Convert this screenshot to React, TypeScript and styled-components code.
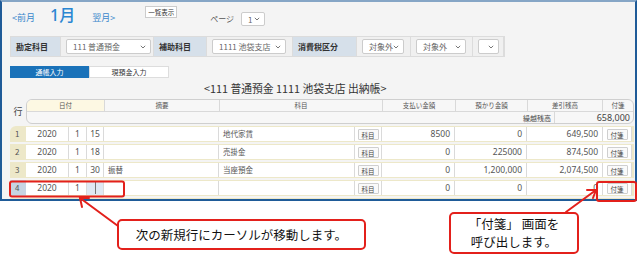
import React from "react";
import styled, { createGlobalStyle } from "styled-components";

const Global = createGlobalStyle`
  html, body { margin: 0; padding: 0; background: #fff; }
  body { font-family: "Noto Sans CJK JP", "Noto Sans", sans-serif; }
  * { box-sizing: border-box; }
`;

const Page = styled.div`
  position: relative;
  width: 639px;
  height: 257px;
  overflow: hidden;
  background: #fff;
`;

const Window = styled.div`
  width: 637px;
  height: 201px;
  border-top: 2px solid #86a6c6;
  border-left: 2px solid #1f5b98;
  border-right: 2px solid #1f5b98;
  border-bottom: 2px solid #1f5b98;
  background: #f4f4f4;
  overflow: hidden;
`;

const Nav = styled.div`
  height: 34px;
  display: flex;
  align-items: flex-start;
  padding-left: 10px;
  color: #3a86c8;
`;

const MonthLink = styled.span<{ $ml?: number }>`
  font-size: 9px;
  margin-top: 10px;
  margin-left: ${(p) => p.$ml ?? 0}px;
  color: #3b88cc;
  line-height: 12px;
`;

const Month = styled.span`
  font-family: "Noto Sans", "Noto Sans CJK JP", sans-serif;
  font-size: 16px;
  line-height: 20px;
  margin-top: 3px;
  margin-left: 15px;
  color: #2a86d2;
  font-weight: 500;
`;

const ListButton = styled.span`
  margin-left: 30px;
  margin-top: 4px;
  height: 12px;
  padding: 0 2px;
  font-size: 6.5px;
  line-height: 11px;
  color: #333;
  background: #fff;
  border: 1px solid #ccc;
`;

const PageLabel = styled.span`
  margin-left: 33px;
  margin-top: 11px;
  font-size: 8px;
  line-height: 12px;
  color: #555;
`;

const SelectBox = styled.span<{ $w: number; $h?: number }>`
  display: flex;
  align-items: center;
  justify-content: space-between;
  width: ${(p) => p.$w}px;
  height: ${(p) => p.$h ?? 15}px;
  padding: 0 4px 0 6px;
  background: #fff;
  border: 1px solid #ccc;
  border-radius: 2px;
  font-size: 8px;
  color: #666;
  white-space: nowrap;
`;

const NavSelect = styled.div`
  display: flex;
  margin-left: 7px;
  margin-top: 10px;
`;

const Chevron = () => (
  <svg width="6" height="4" viewBox="0 0 6 4">
    <path d="M0.8 0.8 L3 3 L5.2 0.8" fill="none" stroke="#777" strokeWidth="1" />
  </svg>
);

const Select = ({ w, h, children }: { w: number; h?: number; children?: React.ReactNode }) => (
  <SelectBox $w={w} $h={h}>
    <span>{children}</span>
    <Chevron />
  </SelectBox>
);

const FilterBar = styled.div`
  margin-left: 8px;
  width: 495px;
  height: 21px;
  display: flex;
  border: 1px solid #dcdcdc;
  background: #f0f0f0;
`;

const FilterLabel = styled.div<{ $w: number }>`
  width: ${(p) => p.$w}px;
  background: #d6e0ea;
  font-size: 8px;
  font-weight: 700;
  color: #333;
  display: flex;
  align-items: center;
  padding-left: 5px;
  border-right: 1px solid #dcdcdc;
`;

const FilterCell = styled.div<{ $w: number }>`
  width: ${(p) => p.$w}px;
  display: flex;
  align-items: center;
  padding-left: 5px;
  border-right: 1px solid #dcdcdc;
`;

const Tabs = styled.div`
  margin: 9px 0 0 8px;
  display: flex;
  height: 12px;
`;

const Tab = styled.div<{ $active?: boolean }>`
  width: ${(p) => (p.$active ? 79 : 80)}px;
  font-size: 7px;
  line-height: 10px;
  text-align: center;
  background: ${(p) => (p.$active ? "#1a72b9" : "#fff")};
  color: ${(p) => (p.$active ? "#fff" : "#333")};
  border: 1px solid ${(p) => (p.$active ? "#1a72b9" : "#ddd")};
`;

const Title = styled.div`
  margin-top: 3px;
  padding-left: 202px;
  font-size: 10.8px;
  line-height: 14px;
  color: #333;
  white-space: nowrap;
`;

const TableArea = styled.div`
  margin-top: 4px;
  padding-left: 8px;
  display: flex;
  flex-direction: column;
`;

const HeadWrap = styled.div`
  display: flex;
`;

const RowMark = styled.div`
  width: 16px;
  font-size: 9px;
  color: #444;
  text-align: center;
  padding-top: 6px;
`;

const HeadBox = styled.div`
  width: 608px;
  height: 25px;
  border: 1px solid #cfcfcf;
  border-radius: 6px;
  background: #f7f7f7;
  overflow: hidden;
`;

const HeadRow = styled.div`
  display: grid;
  grid-template-columns: 78px 115px 163px 73px 72px 75px 1fr;
  height: 12px;
  border-bottom: 1px solid #d9d9d9;
`;

const HeadCell = styled.div<{ $cream?: boolean }>`
  font-size: 6.5px;
  line-height: 11px;
  text-align: center;
  color: #555;
  background: ${(p) => (p.$cream ? "#fdf8e3" : "transparent")};
  border-right: 1px solid #d9d9d9;
  &:last-child { border-right: none; }
`;

const CarryRow = styled.div`
  display: flex;
  height: 12px;
  justify-content: flex-end;
`;

const CarryLabel = styled.div`
  font-size: 7px;
  line-height: 12px;
  color: #444;
  padding-right: 3px;
  border-right: 1px solid #d9d9d9;
`;

const CarryValue = styled.div`
  width: 78px;
  font-family: "Noto Sans", sans-serif;
  font-size: 9px;
  line-height: 12px;
  text-align: right;
  padding-right: 3px;
  color: #444;
`;

const Rows = styled.div`
  margin-top: 2px;
  display: flex;
  flex-direction: column;
  gap: 2px;
`;

const Row = styled.div<{ $first?: boolean }>`
  flex-shrink: 0;
  width: 624px;
  height: 16px;
  display: grid;
  grid-template-columns: 16px 43px 18px 17px 115px 136px 27px 73px 72px 76px 29px;
  padding: 1px 2px 1px 0;
  background: #ede8c9;
  border-top-left-radius: ${(p) => (p.$first ? "6px" : "0")};
`;

const RowNo = styled.div<{ $sel?: boolean }>`
  margin: -1px 0;
  font-size: 8px;
  line-height: 16px;
  padding-left: 5px;
  color: #555;
  background: ${(p) => (p.$sel ? "#c7d4e2" : "transparent")};
`;

const Cell = styled.div<{ $align?: "left" | "center" | "right"; $bg?: string }>`
  background: ${(p) => p.$bg ?? "#fff"};
  border-right: 1px solid #dadada;
  font-family: "Noto Sans", "Noto Sans CJK JP", sans-serif;
  font-size: 8.5px;
  line-height: 14px;
  color: #555;
  padding: 0 4px;
  white-space: nowrap;
  overflow: hidden;
  display: flex;
  align-items: center;
  justify-content: ${(p) =>
    p.$align === "right" ? "flex-end" : p.$align === "center" ? "center" : "flex-start"};
`;

const TextCell = styled(Cell)`
  font-family: "Noto Sans CJK JP", sans-serif;
  font-size: 7.5px;
`;

const MiniButton = styled.span`
  display: inline-block;
  height: 11px;
  padding: 0 3px;
  font-family: "Noto Sans CJK JP", sans-serif;
  font-size: 6.5px;
  line-height: 10px;
  color: #444;
  background: #fafafa;
  border: 1px solid #cfcfcf;
  border-radius: 1px;
`;

const Caret = styled.span`
  display: inline-block;
  width: 1px;
  height: 12px;
  margin-left: 4px;
  background: #777;
`;

const Callouts = styled.div`
  display: flex;
  align-items: flex-start;
  padding-left: 117px;
`;

const Callout = styled.div<{ $w: number; $h: number; $mt: number; $ml: number }>`
  width: ${(p) => p.$w}px;
  height: ${(p) => p.$h}px;
  margin-top: ${(p) => p.$mt}px;
  margin-left: ${(p) => p.$ml}px;
  border: 2px solid #e3201b;
  border-radius: 5px;
  background: #fff;
  color: #111;
  font-size: 12.5px;
  line-height: 18px;
  display: flex;
  flex-direction: column;
  justify-content: center;
  align-items: center;
  text-align: center;
  white-space: nowrap;
`;

const CalloutLine = styled.div`
  height: 18px;
`;

const Overlay = styled.svg`
  position: absolute;
  left: 0;
  top: 0;
  pointer-events: none;
`;

type RowData = {
  no: number;
  day: string;
  summary: string;
  account: string;
  pay: string;
  recv: string;
  bal: string;
};

const rows: RowData[] = [
  { no: 1, day: "15", summary: "", account: "地代家賃", pay: "8500", recv: "0", bal: "649,500" },
  { no: 2, day: "18", summary: "", account: "売掛金", pay: "0", recv: "225000", bal: "874,500" },
  { no: 3, day: "30", summary: "振替", account: "当座預金", pay: "0", recv: "1,200,000", bal: "2,074,500" },
];

export default function App() {
  return (
    <Page>
      <Global />
      <Window>
        <Nav>
          <MonthLink>&lt;前月</MonthLink>
          <Month>1月</Month>
          <MonthLink $ml={17}>翌月&gt;</MonthLink>
          <ListButton>一覧表示</ListButton>
          <PageLabel>ページ</PageLabel>
          <NavSelect>
            <Select w={24} h={14}>1</Select>
          </NavSelect>
        </Nav>
        <FilterBar>
          <FilterLabel $w={50}>勘定科目</FilterLabel>
          <FilterCell $w={93}>
            <Select w={85}>111 普通預金</Select>
          </FilterCell>
          <FilterLabel $w={53}>補助科目</FilterLabel>
          <FilterCell $w={86}>
            <Select w={74}>1111 池袋支店</Select>
          </FilterCell>
          <FilterLabel $w={64}>消費税区分</FilterLabel>
          <FilterCell $w={54}>
            <Select w={42}>対象外</Select>
          </FilterCell>
          <FilterCell $w={62}>
            <Select w={50}>対象外</Select>
          </FilterCell>
          <FilterCell $w={31}>
            <Select w={21}></Select>
          </FilterCell>
        </FilterBar>
        <Tabs>
          <Tab $active>通帳入力</Tab>
          <Tab>現預金入力</Tab>
        </Tabs>
        <Title>&lt;111 普通預金 1111 池袋支店 出納帳&gt;</Title>
        <TableArea>
          <HeadWrap>
            <RowMark>行</RowMark>
            <HeadBox>
              <HeadRow>
                <HeadCell $cream>日付</HeadCell>
                <HeadCell>摘要</HeadCell>
                <HeadCell>科目</HeadCell>
                <HeadCell>支払い金額</HeadCell>
                <HeadCell>預かり金額</HeadCell>
                <HeadCell>差引残高</HeadCell>
                <HeadCell>付箋</HeadCell>
              </HeadRow>
              <CarryRow>
                <CarryLabel>繰越残高</CarryLabel>
                <CarryValue>658,000</CarryValue>
              </CarryRow>
            </HeadBox>
          </HeadWrap>
          <Rows>
            {rows.map((r) => (
              <Row key={r.no} $first={r.no === 1}>
                <RowNo>{r.no}</RowNo>
                <Cell $align="center">2020</Cell>
                <Cell $align="center">1</Cell>
                <Cell $align="center">{r.day}</Cell>
                <TextCell>{r.summary}</TextCell>
                <TextCell>{r.account}</TextCell>
                <Cell $align="center">
                  <MiniButton>科目</MiniButton>
                </Cell>
                <Cell $align="right">{r.pay}</Cell>
                <Cell $align="right">{r.recv}</Cell>
                <Cell $align="right">{r.bal}</Cell>
                <Cell $align="center">
                  <MiniButton>付箋</MiniButton>
                </Cell>
              </Row>
            ))}
            <Row>
              <RowNo $sel>4</RowNo>
              <Cell $align="center">2020</Cell>
              <Cell $align="center">1</Cell>
              <Cell $bg="#dfe9f4">
                <Caret />
              </Cell>
              <TextCell></TextCell>
              <TextCell></TextCell>
              <Cell $align="center">
                <MiniButton>科目</MiniButton>
              </Cell>
              <Cell $align="right">0</Cell>
              <Cell $align="right">0</Cell>
              <Cell $align="right">0</Cell>
              <Cell $align="center">
                <MiniButton>付箋</MiniButton>
              </Cell>
            </Row>
            <Row>
              <RowNo></RowNo>
            </Row>
          </Rows>
        </TableArea>
      </Window>
      <Callouts>
        <Callout $w={249} $h={31} $mt={18} $ml={0}>
          次の新規行にカーソルが移動します。
        </Callout>
        <Callout $w={130} $h={42} $mt={11} $ml={83}>
          <CalloutLine>「付箋」 画面を</CalloutLine>
          <CalloutLine>呼び出します。</CalloutLine>
        </Callout>
      </Callouts>
      <Overlay width="639" height="257" viewBox="0 0 639 257">
        <rect x="10" y="181.5" width="114" height="15" rx="2" fill="none" stroke="#e3201b" strokeWidth="2" />
        <rect x="597" y="182" width="39" height="19" rx="2" fill="none" stroke="#e3201b" strokeWidth="2" />
        <g stroke="#e3201b" strokeWidth="2" fill="none" strokeLinecap="round">
          <line x1="118" y1="226" x2="80" y2="198" />
          <polyline points="82,207 80,198 89,198" />
          <line x1="566" y1="212" x2="596" y2="190" />
          <polyline points="587,190 596,190 593,198" />
        </g>
      </Overlay>
    </Page>
  );
}
